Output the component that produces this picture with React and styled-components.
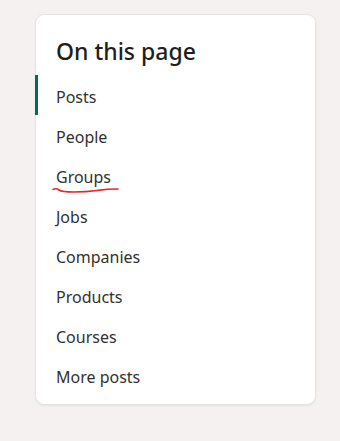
import React from "react";
import styled, { createGlobalStyle } from "styled-components";

const GlobalStyle = createGlobalStyle`
  body {
    margin: 0;
    background: #f4f1f0;
    font-family: "Noto Sans", "Open Sans", sans-serif;
  }
`;

const sections = [
  "Posts",
  "People",
  "Groups",
  "Jobs",
  "Companies",
  "Products",
  "Courses",
  "More posts",
];

const App = () => (
  <>
    <GlobalStyle />
    <Page>
      <Card>
        <Title>On this page</Title>
        <List>
          {sections.map((name, i) => (
            <Item key={name} $active={i === 0}>
              {name}
              {name === "Groups" && (
                <Squiggle width="68" height="8" viewBox="0 0 68 8">
                  <path
                    d="M1 3.5 C 3 2.5, 5 2.5, 7 4 S 14 6, 22 6 S 38 5.5, 45 4.5 S 55 3, 66 3"
                    fill="none"
                    stroke="#e3262b"
                    strokeWidth="1.6"
                    strokeLinecap="round"
                  />
                </Squiggle>
              )}
            </Item>
          ))}
        </List>
      </Card>
    </Page>
  </>
);

const Page = styled.div`
  padding: 14px 24px 36px 35px;
`;

const Card = styled.nav`
  box-sizing: border-box;
  width: 281px;
  height: 391px;
  background: #ffffff;
  border: 1px solid #e6e3e1;
  border-radius: 9px;
  padding: 22px 0 10px 0;
  box-shadow: 0 1px 2px rgba(0, 0, 0, 0.06);
`;

const Title = styled.h2`
  margin: 0 0 10px 20px;
  font-size: 23px;
  line-height: 28px;
  font-weight: 500;
  color: #201f1e;
`;

const List = styled.ul`
  list-style: none;
  margin: 0 0 0 -1px;
  padding: 0;
`;

const Item = styled.li`
  position: relative;
  box-sizing: border-box;
  height: 40px;
  display: flex;
  align-items: center;
  padding: 3px 0 0 18px;
  font-size: 16px;
  font-weight: 400;
  color: #323130;
  border-left: 3px solid ${({ $active }) => ($active ? "#006b54" : "transparent")};
`;

const Squiggle = styled.svg`
  position: absolute;
  left: 14px;
  top: 31px;
`;

export default App;
